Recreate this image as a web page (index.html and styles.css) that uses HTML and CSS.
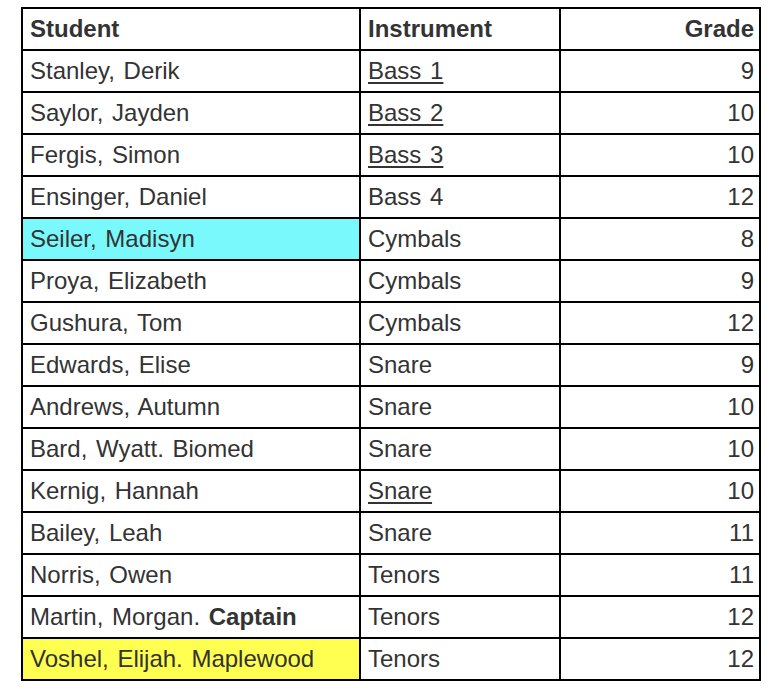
FILE: index.html
```html
<!DOCTYPE html>
<html>
<head>
<meta charset="utf-8">
<link rel="stylesheet" href="styles.css">
</head>
<body>
<table class="roster">
  <tr class="head"><th class="c-student">Student</th><th class="c-inst">Instrument</th><th class="c-grade">Grade</th></tr>
  <tr><td>Stanley, Derik</td><td><span class="u">Bass 1</span></td><td class="num">9</td></tr>
  <tr><td>Saylor, Jayden</td><td><span class="u">Bass 2</span></td><td class="num">10</td></tr>
  <tr><td>Fergis, Simon</td><td><span class="u">Bass 3</span></td><td class="num">10</td></tr>
  <tr><td>Ensinger, Daniel</td><td>Bass 4</td><td class="num">12</td></tr>
  <tr><td class="cyan">Seiler, Madisyn</td><td>Cymbals</td><td class="num">8</td></tr>
  <tr><td>Proya, Elizabeth</td><td>Cymbals</td><td class="num">9</td></tr>
  <tr><td>Gushura, Tom</td><td>Cymbals</td><td class="num">12</td></tr>
  <tr><td>Edwards, Elise</td><td>Snare</td><td class="num">9</td></tr>
  <tr><td>Andrews, Autumn</td><td>Snare</td><td class="num">10</td></tr>
  <tr><td>Bard, Wyatt. Biomed</td><td>Snare</td><td class="num">10</td></tr>
  <tr><td>Kernig, Hannah</td><td><span class="u">Snare</span></td><td class="num">10</td></tr>
  <tr><td>Bailey, Leah</td><td>Snare</td><td class="num">11</td></tr>
  <tr><td>Norris, Owen</td><td>Tenors</td><td class="num">11</td></tr>
  <tr><td>Martin, Morgan. <b>Captain</b></td><td>Tenors</td><td class="num">12</td></tr>
  <tr><td class="yellow">Voshel, Elijah. Maplewood</td><td>Tenors</td><td class="num">12</td></tr>
</table>
</body>
</html>
```
FILE: styles.css
```css
html, body {
  margin: 0;
  padding: 0;
  background: #ffffff;
}
body {
  padding: 7px 0 0 21px;
  font-family: "Liberation Sans", Arial, sans-serif;
  color: #333333;
}
.roster {
  border-collapse: collapse;
  font-size: 24px;
  word-spacing: 2px;
}
.roster th, .roster td {
  border: 2px solid #000000;
  height: 40px;
  line-height: 28px;
  padding: 0 5px 0 7px;
  text-align: left;
  vertical-align: middle;
  white-space: nowrap;
}
.roster th {
  font-weight: bold;
}
.c-student { width: 324px; }
.c-inst { width: 186px; }
.c-grade { width: 186px; }
.roster .c-grade, .roster .num {
  text-align: right;
}
.u {
  text-decoration: underline;
  text-underline-offset: 3px;
}
.cyan { background: #7af9fc; }
.yellow { background: #ffff52; }
b { font-weight: bold; }
```
